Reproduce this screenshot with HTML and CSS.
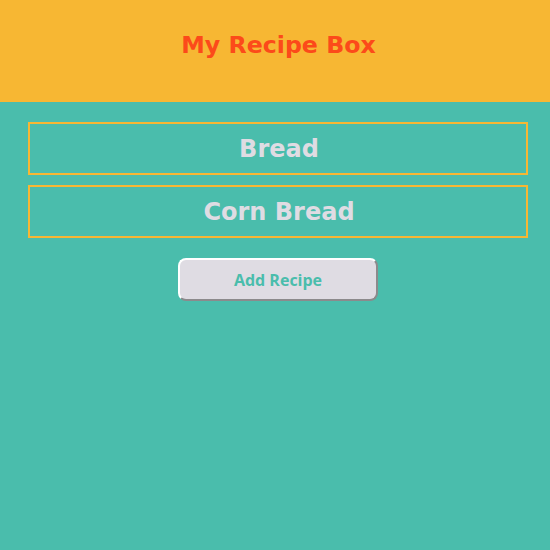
FILE: index.html
```html
<!DOCTYPE html>
<html>
<head>
<meta charset="utf-8">
<link rel="stylesheet" href="styles.css">
</head>
<body>
<header class="header">
  <h1 class="title">My Recipe Box</h1>
</header>
<main class="list">
  <div class="recipe">Bread</div>
  <div class="recipe">Corn Bread</div>
  <button class="add">Add Recipe</button>
</main>
</body>
</html>
```
FILE: styles.css
```css
html, body {
  margin: 0;
  padding: 0;
  height: 100%;
  background: #4ABDAC;
  font-family: "DejaVu Sans", sans-serif;
}
.header {
  background: #F7B733;
  height: 102px;
  box-sizing: border-box;
  padding: 30px 0 0 7px;
}
.title {
  margin: 0;
  text-align: center;
  color: #FC4A1A;
  font-size: 23.7px;
  line-height: 30px;
  font-weight: bold;
}
.list {
  display: flex;
  flex-direction: column;
  align-items: center;
  padding: 20px 22px 0 28px;
  gap: 10px;
}
.recipe {
  box-sizing: border-box;
  width: 500px;
  height: 53px;
  border: 2px solid #F7B733;
  color: #DFDCE3;
  font-size: 24px;
  font-weight: bold;
  display: flex;
  align-items: center;
  justify-content: center;
  padding-left: 2px;
}
.add {
  margin-top: 10px;
  width: 200px;
  height: 43px;
  box-sizing: border-box;
  background: #DFDCE3;
  color: #4ABDAC;
  border: 2px solid #FFFFFF;
  border-right-color: #8C8A8C;
  border-bottom-color: #8C8A8C;
  border-radius: 8px;
  font-family: "Open Sans", sans-serif;
  font-weight: bold;
  font-size: 16px;
}
```
